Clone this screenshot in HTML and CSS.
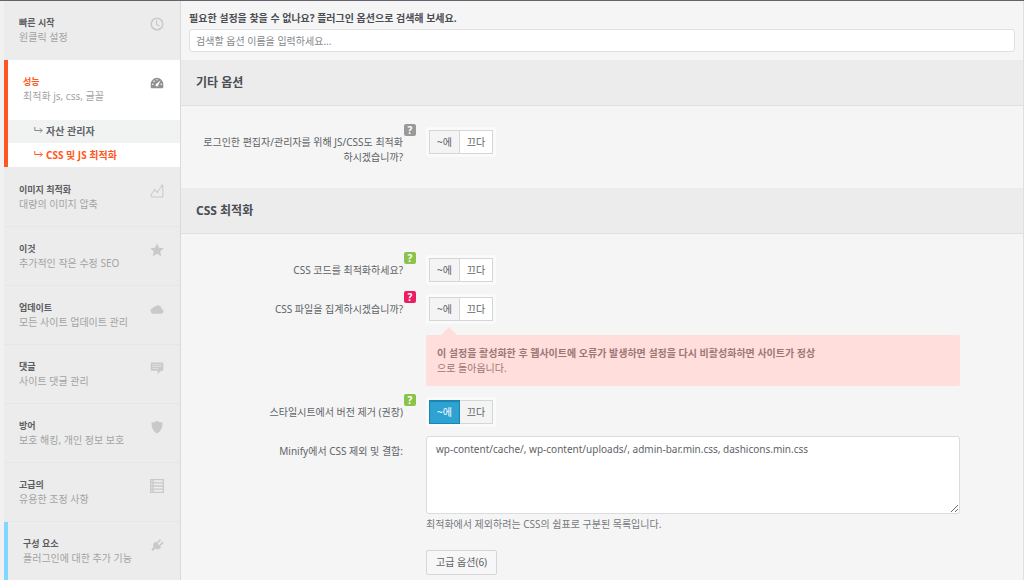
FILE: index.html
```html
<!DOCTYPE html>
<html lang="ko">
<head>
    <meta charset="utf-8">
    <title>CSS 및 JS 최적화</title>
    <link rel="stylesheet" href="styles.css">
</head>
<body>
    <div class="panel">
        <nav class="sidebar">
            <a href="#" class="nav-item nav-first">
                <span class="nav-text"><strong>빠른 시작</strong><span>원클릭 설정</span></span>
                <svg class="nav-icon" viewBox="0 0 14 14" fill="none" stroke="currentColor" stroke-width="1.5">
                    <circle cx="7" cy="7" r="5.8" />
                    <path d="M6.6 3.2v4.2l2.8 1.6" stroke-width="1.2" />
                </svg>
            </a>

            <div class="nav-active">
                <a href="#" class="nav-item">
                    <span class="nav-text"><strong>성능</strong><span>최적화 js, css, 글꼴</span></span>
                    <svg class="nav-icon" viewBox="0 0 14 14">
                        <path fill="currentColor" d="M7 1.800A6.300 6.300 0 0 0 .7 8.100v3.200q0 .9.9.9h10.800q.9 0 .9-.9V8.100A6.300 6.300 0 0 0 7 1.800z" />
                        <circle cx="2.8" cy="8.3" r=".8" fill="#fff" />
                        <circle cx="4.1" cy="5.2" r=".8" fill="#fff" />
                        <circle cx="7" cy="3.8" r=".7" fill="#fff" />
                        <circle cx="11.3" cy="8.3" r=".8" fill="#fff" />
                        <path fill="#fff" d="M10.6 4.500 8.300 9a1.400 1.400 0 1 1-1.900-1.300z" />
                    </svg>
                </a>
                <a href="#" class="nav-sub">
                    <svg class="sub-icon" viewBox="0 0 9 7" fill="none" stroke="currentColor"><path d="M.8 0v3.5h7M6 1.3l2.2 2.2L6 5.7" /></svg>
                    자산 관리자
                </a>
                <a href="#" class="nav-sub current">
                    <svg class="sub-icon" viewBox="0 0 9 7" fill="none" stroke="currentColor"><path d="M.8 0v3.5h7M6 1.3l2.2 2.2L6 5.7" /></svg>
                    CSS 및 JS 최적화
                </a>
            </div>

            <a href="#" class="nav-item">
                <span class="nav-text"><strong>이미지 최적화</strong><span>대량의 이미지 압축</span></span>
                <svg class="nav-icon" viewBox="0 0 14 14" fill="none" stroke="currentColor">
                    <path d="M1 10.3 4.6 6l2.7 2.2 4.6-6.4M1.2 10v3h11.6V1.5" />
                    <circle cx="4.6" cy="6" r=".6" />
                    <circle cx="7.4" cy="8" r=".6" />
                    <circle cx="12" cy="1.6" r=".7" />
                </svg>
            </a>
            <a href="#" class="nav-item">
                <span class="nav-text"><strong>이것</strong><span>추가적인 작은 수정 SEO</span></span>
                <svg class="nav-icon" viewBox="0 0 14 14" fill="currentColor">
                    <path d="M7 .3l2 4.4 4.8.5-3.6 3.2 1.1 4.9L7 10.8l-4.3 2.5 1.1-4.9L.2 5.2 5 4.7z" />
                </svg>
            </a>
            <a href="#" class="nav-item">
                <span class="nav-text"><strong>업데이트</strong><span>모든 사이트 업데이트 관리</span></span>
                <svg class="nav-icon" viewBox="0 0 14 14" fill="currentColor">
                    <path d="M3.2 11.8a2.9 2.9 0 0 1-.4-5.7 2.4 2.4 0 0 1 2.6-1.5 3.5 3.5 0 0 1 6.2 2.1 2.6 2.6 0 0 1-.3 5.1z" />
                </svg>
            </a>
            <a href="#" class="nav-item">
                <span class="nav-text"><strong>댓글</strong><span>사이트 댓글 관리</span></span>
                <svg class="nav-icon" viewBox="0 0 14 14">
                    <path fill="currentColor" d="M1.6 1.5h10.8q.9 0 .9.9v6.4q0 .9-.9.9H11l-3.4 3.4V9.7h-6q-.9 0-.9-.9V2.4q0-.9.9-.9z" />
                    <path stroke="#ececec" stroke-width=".6" d="M2.300 3.600h9.400M2.300 5.500h9.400M2.300 7.400h6.400" />
                </svg>
            </a>
            <a href="#" class="nav-item">
                <span class="nav-text"><strong>방어</strong><span>보호 해킹, 개인 정보 보호</span></span>
                <svg class="nav-icon" viewBox="0 0 14 14" fill="currentColor">
                    <path d="M7 .7C5.6 1.8 3.6 2.2 1.6 2.2c-.1 5.4 1.2 8.8 5.4 11.2 4.2-2.4 5.5-5.8 5.4-11.2-2 0-4-.4-5.4-1.5z" />
                </svg>
            </a>
            <a href="#" class="nav-item">
                <span class="nav-text"><strong>고급의</strong><span>유용한 조정 사항</span></span>
                <svg class="nav-icon" viewBox="0 0 14 14" fill="none" stroke="currentColor" stroke-width="1.3">
                    <path d="M.7.7h12.6v12.6H.7zM.7 3.9h12.6M.7 7h12.6M.7 10.1h12.6M3 .7v12.6" />
                </svg>
            </a>
            <a href="#" class="nav-item nav-components">
                <span class="nav-text"><strong>구성 요소</strong><span>플러그인에 대한 추가 기능</span></span>
                <svg class="nav-icon" viewBox="0 0 14 14">
                    <path fill="currentColor" d="M5.2 3.5l6 6c-1.8 1.9-4.1 2.2-6.1 1.3L2.9 13 1.3 11.4l2-2.1C2.7 7.3 3.5 5.2 5.2 3.5z" />
                    <path fill="none" stroke="currentColor" stroke-width="1.7" stroke-linecap="round" d="M7.2 5 10 2.2M9.7 7.5l2.9-2.9" />
                </svg>
            </a>
        </nav>

        <main class="content">
            <div class="search">
                <label for="search">필요한 설정을 찾을 수 없나요? 플러그인 옵션으로 검색해 보세요.</label>
                <input type="text" id="search" placeholder="검색할 옵션 이름을 입력하세요...">
            </div>

            <h2>기타 옵션</h2>
            <div class="options">
                <div class="row">
                    <div class="row-label" id="l1">로그인한 편집자/관리자를 위해 JS/CSS도 최적화하시겠습니까?</div>
                    <button type="button" class="help">?</button>
                    <div class="control">
                        <div class="toggle" role="radiogroup" aria-labelledby="l1">
                            <input type="radio" name="logged" id="logged-on"><label for="logged-on">~에</label>
                            <input type="radio" name="logged" id="logged-off" checked><label for="logged-off">끄다</label>
                        </div>
                    </div>
                </div>
            </div>

            <h2>CSS 최적화</h2>
            <div class="options">
                <div class="row">
                    <div class="row-label" id="l2">CSS 코드를 최적화하세요?</div>
                    <button type="button" class="help green">?</button>
                    <div class="control">
                        <div class="toggle" role="radiogroup" aria-labelledby="l2">
                            <input type="radio" name="minify" id="minify-on"><label for="minify-on">~에</label>
                            <input type="radio" name="minify" id="minify-off" checked><label for="minify-off">끄다</label>
                        </div>
                    </div>
                </div>
                <div class="row">
                    <div class="row-label" id="l3">CSS 파일을 집계하시겠습니까?</div>
                    <button type="button" class="help red">?</button>
                    <div class="control">
                        <div class="toggle" role="radiogroup" aria-labelledby="l3">
                            <input type="radio" name="aggregate" id="aggregate-on"><label for="aggregate-on">~에</label>
                            <input type="radio" name="aggregate" id="aggregate-off" checked><label for="aggregate-off">끄다</label>
                        </div>
                        <div class="warning">
                            <strong>이 설정을 활성화한 후 웹사이트에 오류가 발생하면 설정을 다시 비활성화하면 사이트가 정상</strong><br>
                            으로 돌아옵니다.
                        </div>
                    </div>
                </div>
                <div class="row">
                    <div class="row-label" id="l4">스타일시트에서 버전 제거 (권장)</div>
                    <button type="button" class="help green">?</button>
                    <div class="control">
                        <div class="toggle" role="radiogroup" aria-labelledby="l4">
                            <input type="radio" name="version" id="version-on" checked><label for="version-on">~에</label>
                            <input type="radio" name="version" id="version-off"><label for="version-off">끄다</label>
                        </div>
                    </div>
                </div>
                <div class="row">
                    <label class="row-label" for="exclude">Minify에서 CSS 제외 및 결합:</label>
                    <div class="control">
                        <textarea id="exclude">wp-content/cache/, wp-content/uploads/, admin-bar.min.css, dashicons.min.css</textarea>
                        <p class="hint">최적화에서 제외하려는 CSS의 쉼표로 구분된 목록입니다.</p>
                        <button type="button" class="more">고급 옵션(6)</button>
                    </div>
                </div>
            </div>
        </main>
    </div>
</body>
</html>
```

FILE: styles.css
```css
* {
    box-sizing: border-box;
}

body {
    margin: 0;
    background: #f1f1f1;
    border-top: 1px solid #62636b;
    color: #606367;
    font-family: "Noto Sans", "Noto Sans CJK KR", sans-serif;
    font-size: 10px;
    line-height: 15px;
}

a {
    color: inherit;
    text-decoration: none;
}

input,
textarea,
button {
    font: inherit;
    color: inherit;
}

.panel {
    display: flex;
    height: calc(100vh - 1px);
    overflow: hidden;
    padding-left: 4px;
}

/* Sidebar */
.sidebar {
    flex: 0 0 176px;
    background: #ececec;
}

.nav-item {
    display: flex;
    justify-content: space-between;
    align-items: flex-start;
    height: 59px;
    padding: 15px 16px 0 15px;
    border-bottom: 1px solid #e6e6e6;
}

.nav-first {
    border-bottom: none;
}

.nav-text {
    color: #a3a3a3;
    line-height: 14px;
}

.nav-text strong {
    display: block;
    color: #5c5d61;
    font-size: 9px;
}

.nav-icon {
    flex: none;
    width: 14px;
    height: 14px;
    margin-top: 1px;
    color: #c9c9c9;
}

.nav-active {
    margin-bottom: 1px;
    border-left: 4px solid #ff5722;
    background: #fff;
}

.nav-active .nav-item {
    border-bottom: none;
    height: 60px;
}

.nav-active strong {
    color: #ff5722;
}

.nav-active .nav-icon {
    color: #8f9194;
}

.nav-sub {
    display: flex;
    align-items: center;
    gap: 3px;
    height: 23px;
    padding-left: 26px;
    background: #f1f3f2;
    font-weight: bold;
}

.nav-sub.current {
    height: 24px;
    background: #fff;
    color: #ff5722;
}

.sub-icon {
    width: 9px;
    height: 7px;
    margin-bottom: 2px;
    color: #888;
}

.current .sub-icon {
    color: #ff5722;
}

.nav-components {
    border-left: 4px solid #80d8ff;
}

/* Content */
.content {
    flex: 1;
    min-width: 0;
    background: #f5f5f5;
    border-left: 1px solid #dadada;
    border-right: 1px solid #e0e0e0;
}

.search {
    padding: 10px 8px 8px;
}

.search label {
    display: block;
    margin-bottom: 3px;
    color: #4a4d52;
    font-weight: bold;
}

.search input {
    display: block;
    width: 100%;
    height: 23px;
    padding: 0 6px;
    border: 1px solid #e0e0e0;
    border-radius: 3px;
    background: #fff;
}

.search input::placeholder {
    color: #85878a;
}

h2 {
    margin: 0;
    padding: 14px 15px;
    background: #ececec;
    border-bottom: 1px solid #e0e0e0;
    color: #4a4d52;
    font-size: 12px;
    line-height: 17px;
}

.options {
    padding: 18px 63px 23px 15px;
}

.row {
    display: grid;
    grid-template-columns: 207px 12px 1fr;
    column-gap: 1px;
    margin-bottom: 6px;
}

.row:last-child {
    margin-bottom: 0;
}

.row-label {
    padding-top: 11px;
    text-align: right;
}

.help {
    width: 12px;
    height: 12px;
    padding: 0;
    border: none;
    border-radius: 2px;
    background: #999;
    color: #fff;
    font-size: 10px;
    font-weight: bold;
    line-height: 12px;
}

.help.green {
    background: #8bc34a;
}

.help.red {
    background: #e91e63;
}

.control {
    grid-column: 3;
    padding: 3px 0 0 9px;
}

.toggle {
    display: flex;
    width: 70px;
    height: 30px;
    padding: 3px;
    border-radius: 3px;
    background: #fafafa;
}

.toggle input {
    appearance: none;
    width: 0;
    height: 0;
    margin: 0;
}

.toggle label {
    width: 31px;
    border: 1px solid #d6d6d6;
    background: #f4f4f4;
    line-height: 22px;
    text-align: center;
}

.toggle label:last-child {
    width: 33px;
    border-left: none;
}

.toggle input:checked + label {
    background: #fff;
}

.toggle input:checked + label:not(:last-child) {
    border-color: #1b85b0;
    background: #2ea2d3;
    box-shadow: inset 0 1px 1px #1b85b0;
    color: #fff;
}

.warning {
    position: relative;
    margin: 11px 0 2px;
    padding: 11px 11px 10px;
    border-radius: 2px;
    background: #ffdedc;
    color: #9b7774;
}

.warning:before {
    content: '';
    position: absolute;
    top: -8px;
    left: 15px;
    border: 8px solid transparent;
    border-top: none;
    border-bottom-color: #ffdedc;
}

textarea {
    display: block;
    width: 100%;
    height: 78px;
    padding: 5px 9px;
    border: 1px solid #dcdcdc;
    border-radius: 3px;
    background: #fff;
}

.hint {
    margin: 3px 0 18px;
    color: #77797c;
}

.more {
    height: 25px;
    padding: 0 9px;
    border: 1px solid #d6d6d6;
    border-radius: 2px;
    background: #f7f7f7;
}
```
